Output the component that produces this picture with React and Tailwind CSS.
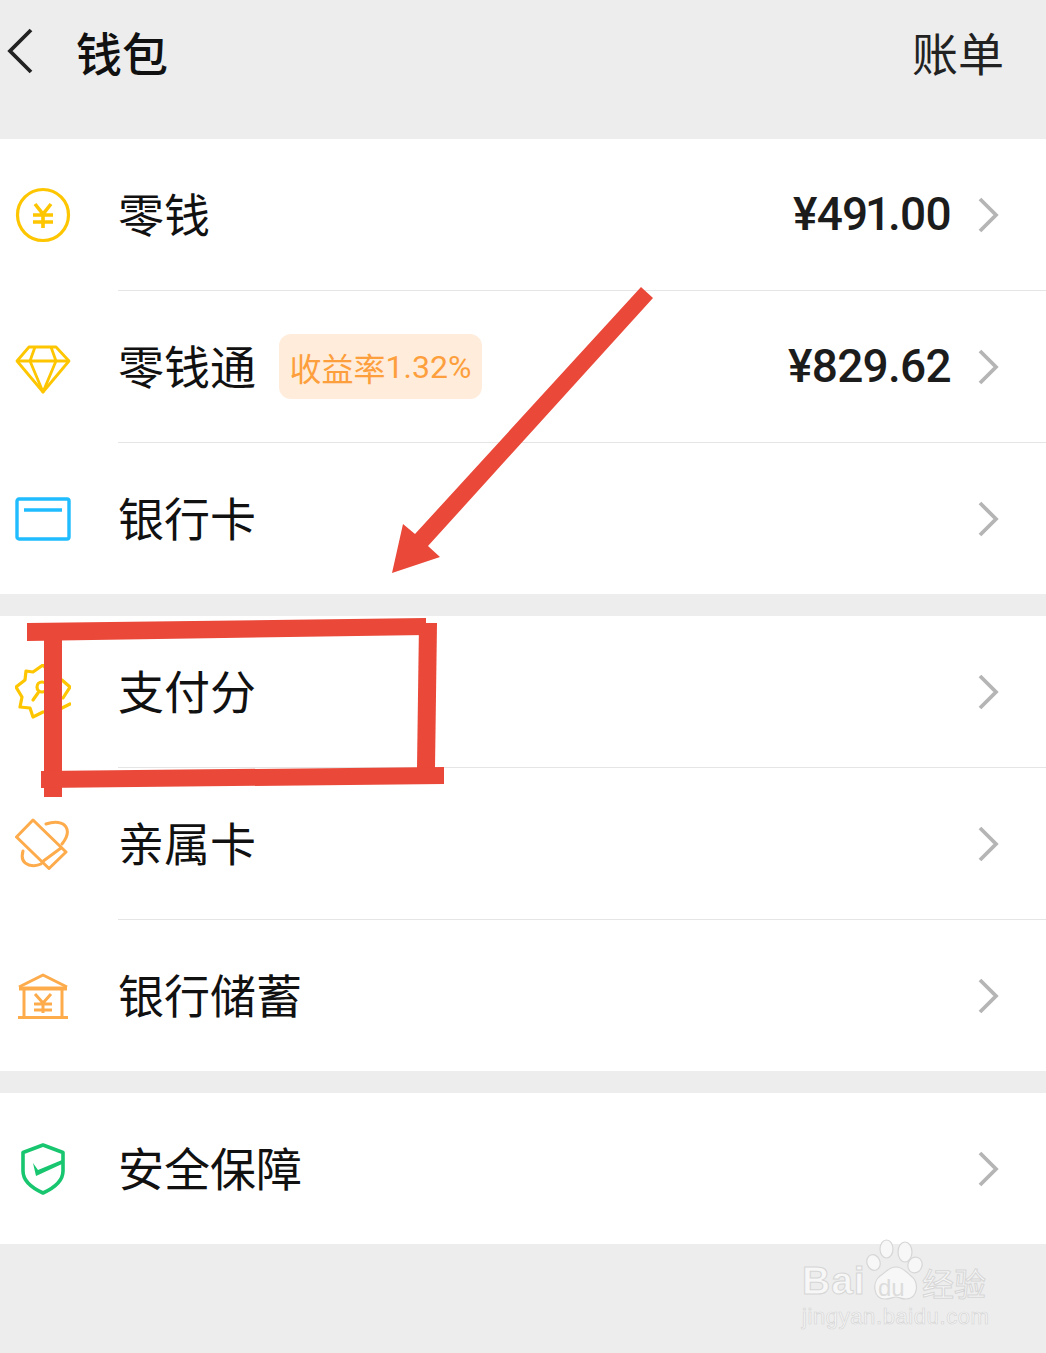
import React from 'react';

const cjk = { fontFamily: '"Noto Sans CJK SC", "Noto Sans", sans-serif' };

const CoinIcon = () => (
    <svg width="56" height="56" viewBox="0 0 56 56" fill="none" stroke="#fdc600" strokeWidth="3.2">
        <circle cx="28" cy="28" r="25.5" />
        <path d="M20 17l8 10 8-10M18 28h20M18 35h20M28 27v14" strokeWidth="3.6" />
    </svg>
);

const DiamondIcon = () => (
    <svg width="56" height="50" viewBox="0 0 56 50" fill="none" stroke="#fdc600" strokeWidth="2.8" strokeLinejoin="round" className="mt-[5px]">
        <path d="M14 2h27l13 14-26 31L2 16z" />
        <path d="M2 16h52M20 2l-5 14 13 31 13-31-5-14" />
    </svg>
);

const CardIcon = () => (
    <svg width="56" height="44" viewBox="0 0 56 44" fill="none" stroke="#1fbcff" strokeWidth="3.4">
        <rect x="2" y="2" width="52" height="40" rx="2" />
        <path d="M9 13h38" />
    </svg>
);

const ScoreIcon = () => (
    <svg width="56" height="56" viewBox="0 0 56 56" fill="none" stroke="#fdc600" strokeWidth="3.2" strokeLinejoin="round" strokeLinecap="round">
        <path d="M48 34l7-11-8-7-9-3-10-12-10 7-7-1-1 9-9 7 6 10-2 10 10 1 3 9 10-5 15-2 12-6" />
        <circle cx="27" cy="23" r="5" />
        <path d="M18 36l5-7" />
    </svg>
);

const FamilyCardIcon = () => (
    <svg width="56" height="52" viewBox="0 0 56 52" fill="none" stroke="#fdab4b" strokeWidth="3" strokeLinejoin="round" strokeLinecap="round">
        <path d="M18 2L1.5 19 34 50.5 51 34z" />
        <path d="M46 30L27 44" />
        <path d="M31 6c9-3 17-2 20 3 3 5 0 12-4 17" />
        <path d="M8 33c-2 7 0 12 6 14 4 1 8 1 12-1" />
    </svg>
);

const BankIcon = () => (
    <svg width="50" height="46" viewBox="0 0 50 46" fill="none" stroke="#fdab4b" strokeWidth="3">
        <path d="M1 14L25 2l24 12" strokeLinejoin="round" />
        <path d="M1 15.5h48" strokeWidth="4" />
        <path d="M6 17v26M44 17v26M0 44.5h50" />
        <path d="M17 21l8 9 8-9M16 31h18M16 37h18M25 30v10" />
    </svg>
);

const ShieldIcon = () => (
    <svg width="44" height="52" viewBox="0 0 44 52" fill="none" stroke="#18c66f" strokeWidth="3.6">
        <path d="M22 2l20 7.5V28c0 10-9 17-20 22C11 45 2 38 2 28V9.5z" strokeLinejoin="round" />
        <path d="M12 20l5 7 24-10v4L15 33z" fill="#18c66f" stroke="none" />
    </svg>
);

const Chevron = () => (
    <svg width="22" height="36" viewBox="0 0 22 36" fill="none" stroke="#b5b5b5" strokeWidth="3.8" className="mr-[47px] ml-[26px] shrink-0">
        <path d="M3 2l16 16L3 34" />
    </svg>
);

const Row = ({ icon, label, amount, badge, last }) => (
    <div className={`flex items-stretch bg-white ${last ? 'h-[151px]' : 'h-[152px]'}`}>
        <div className="flex w-[86px] shrink-0 items-center justify-center">{icon}</div>
        <div className={`ml-[32px] flex flex-1 items-center ${last ? '' : 'border-b border-[#e5e5e5]'}`}>
            <span className="pb-[5px] text-[46px] leading-none text-[#111]" style={cjk}>{label}</span>
            {badge && (
                <span className="ml-[23px] flex h-[65px] w-[203px] items-center justify-center rounded-xl bg-[#ffecdb] text-[32px] text-[#fd9f3c]" style={cjk}>
                    收益率<span className="font-['Roboto',sans-serif]">{badge}</span>
                </span>
            )}
            <span className="ml-auto pb-[2px] font-['Roboto',sans-serif] text-[46px] leading-none font-medium tracking-[-0.7px] text-[#1c1c1c]">{amount}</span>
            <Chevron />
        </div>
    </div>
);

// Hand-drawn red marks laid over the page
const Marks = () => (
    <svg className="pointer-events-none absolute top-0 left-0" width="1046" height="1353" fill="#ea4839">
        <polygon points="641,287 653,298 428,546 440,557 392,573 403,524 415,534" />
        <polygon points="27,623 426,618 426,635 27,641" />
        <polygon points="419,623 437,623 435,768 417,768" />
        <polygon points="44,640 62,640 62,797 44,797" />
        <polygon points="41,771 444,767 444,784 41,788" />
    </svg>
);

const PawMark = () => (
    <svg width="60" height="66" viewBox="0 0 60 66" fill="#f7f7f7" stroke="#d6d6d6" strokeWidth="1.2">
        <ellipse cx="7.5" cy="24.5" rx="6.5" ry="8" transform="rotate(-20 7.5 24.5)" />
        <ellipse cx="20.5" cy="11" rx="6.5" ry="9" />
        <ellipse cx="39" cy="14" rx="7" ry="10" />
        <ellipse cx="49" cy="27" rx="7" ry="8" transform="rotate(20 49 27)" />
        <path d="M30 29c7 0 10 5 15 9 8 5 8 22-5 23-5 0-7-2-10-2s-6 2-11 2C7 61 6 44 14 38c6-4 9-9 16-9z" />
    </svg>
);

const Watermark = () => (
    <div className="pointer-events-none absolute top-[1240px] left-[802px] h-[92px] w-[190px]">
        <span className="absolute top-[21px] left-0 font-['Liberation_Sans',sans-serif] text-[39px] leading-none font-bold tracking-[1px] text-[#f7f7f7] [-webkit-text-stroke:1px_#d6d6d6]">Bai</span>
        <span className="absolute top-[-2px] left-[64px]"><PawMark /></span>
        <span className="absolute top-[36px] left-[76px] font-['Liberation_Sans',sans-serif] text-[24px] leading-none text-[#dcdcdc]">du</span>
        <span className="absolute top-[26px] left-[120px] text-[32px] leading-none text-[#f7f7f7] [-webkit-text-stroke:1px_#d6d6d6]" style={cjk}>经验</span>
        <span className="absolute top-[66px] left-0 font-['Liberation_Sans',sans-serif] text-[22px] leading-none tracking-[0.6px] text-[#f7f7f7] [-webkit-text-stroke:0.7px_#d6d6d6]">jingyan.baidu.com</span>
    </div>
);

const App = () => (
    <div className="relative h-[1353px] w-[1046px] overflow-hidden bg-[#ededed]">
        <header className="flex h-[139px] items-start bg-[#ededed] pt-[19px]">
            <div className="flex h-[64px] w-full items-center text-[#111]">
                <svg width="28" height="46" viewBox="0 0 28 46" fill="none" stroke="#222" strokeWidth="3.8" className="ml-[6px]">
                    <path d="M25 2L4 23l21 21" />
                </svg>
                <span className="ml-[42px] text-[46px] leading-none font-medium" style={cjk}>钱包</span>
                <span className="mr-[42px] ml-auto text-[46px] leading-none text-[#222]" style={cjk}>账单</span>
            </div>
        </header>

        <section>
            <Row icon={<CoinIcon />} label="零钱" amount={<>¥49<span className="-mx-[2.5px]">1</span>.00</>} />
            <Row icon={<DiamondIcon />} label="零钱通" badge="1.32%" amount="¥829.62" />
            <Row icon={<CardIcon />} label="银行卡" last />
        </section>

        <section className="mt-[22px]">
            <Row icon={<ScoreIcon />} label="支付分" />
            <Row icon={<FamilyCardIcon />} label="亲属卡" />
            <Row icon={<BankIcon />} label="银行储蓄" last />
        </section>

        <section className="mt-[22px]">
            <Row icon={<ShieldIcon />} label="安全保障" last />
        </section>

        <Marks />
        <Watermark />
    </div>
);

export default App;
